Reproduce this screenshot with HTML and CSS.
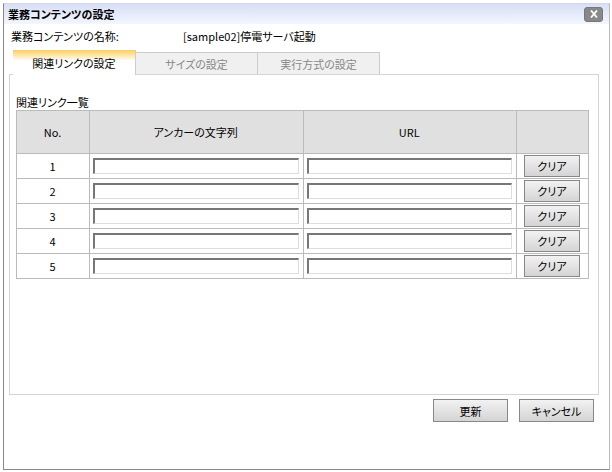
FILE: index.html
```html
<!DOCTYPE html>
<html lang="ja">
<head>
    <meta charset="UTF-8">
    <meta name="viewport" content="width=device-width, initial-scale=1.0">
    <title>業務コンテンツの設定</title>
    <link rel="stylesheet" href="styles.css">
</head>
<body>
    <main class="dialog">
        <header class="title-bar">
            <h1>業務コンテンツの設定</h1>
            <button type="button" class="close-button" aria-label="閉じる">
                <svg width="8" height="8" viewBox="0 0 8 8"><path d="M1 0.5L7 7.5M7 0.5L1 7.5" stroke="#fff" stroke-width="1.8"/></svg>
            </button>
        </header>
        <div class="name-row">
            <span class="name-label">業務コンテンツの名称:</span>
            <span>[sample02]停電サーバ起動</span>
        </div>
        <div class="tabs" role="tablist">
            <button type="button" class="tab active" role="tab" aria-selected="true">関連リンクの設定</button>
            <button type="button" class="tab" role="tab" aria-selected="false">サイズの設定</button>
            <button type="button" class="tab" role="tab" aria-selected="false">実行方式の設定</button>
        </div>
        <section class="panel" role="tabpanel">
            <table class="links">
                <caption>関連リンク一覧</caption>
                <thead>
                    <tr>
                        <th class="col-no">No.</th>
                        <th id="anchor">アンカーの文字列</th>
                        <th id="url">URL</th>
                        <th class="col-action"></th>
                    </tr>
                </thead>
                <tbody>
                    <tr>
                        <td id="row1">1</td>
                        <td><input type="text" aria-labelledby="anchor row1"></td>
                        <td><input type="text" aria-labelledby="url row1"></td>
                        <td><button type="button" class="button clear">クリア</button></td>
                    </tr>
                    <tr>
                        <td id="row2">2</td>
                        <td><input type="text" aria-labelledby="anchor row2"></td>
                        <td><input type="text" aria-labelledby="url row2"></td>
                        <td><button type="button" class="button clear">クリア</button></td>
                    </tr>
                    <tr>
                        <td id="row3">3</td>
                        <td><input type="text" aria-labelledby="anchor row3"></td>
                        <td><input type="text" aria-labelledby="url row3"></td>
                        <td><button type="button" class="button clear">クリア</button></td>
                    </tr>
                    <tr>
                        <td id="row4">4</td>
                        <td><input type="text" aria-labelledby="anchor row4"></td>
                        <td><input type="text" aria-labelledby="url row4"></td>
                        <td><button type="button" class="button clear">クリア</button></td>
                    </tr>
                    <tr>
                        <td id="row5">5</td>
                        <td><input type="text" aria-labelledby="anchor row5"></td>
                        <td><input type="text" aria-labelledby="url row5"></td>
                        <td><button type="button" class="button clear">クリア</button></td>
                    </tr>
                </tbody>
            </table>
        </section>
        <footer class="actions">
            <button type="button" class="button">更新</button>
            <button type="button" class="button">キャンセル</button>
        </footer>
    </main>
</body>
</html>
```
FILE: styles.css
```css
* {
    box-sizing: border-box;
}
body {
    display: flex;
    min-height: 100vh;
    margin: 0;
    padding: 3px 2px 2px 3px;
    background: #fff;
    color: #000;
    font-family: "Noto Sans CJK JP", sans-serif;
    font-size: 11px;
    line-height: 16px;
    font-feature-settings: "palt";
}
button, input {
    font: inherit;
    font-feature-settings: inherit;
    color: inherit;
}
.dialog {
    flex: 1;
    display: flex;
    flex-direction: column;
    border: 1px solid #888;
    border-top-color: #d4d8e4;
    border-right-color: #bbb;
}
.title-bar {
    display: flex;
    align-items: center;
    justify-content: space-between;
    height: 20px;
    padding: 0 6px 0 4px;
    background: linear-gradient(#d8dff5, #f3f6ff);
}
.title-bar h1 {
    margin: 0;
    font-size: 11px;
    font-weight: bold;
}
.close-button {
    display: flex;
    align-items: center;
    justify-content: center;
    width: 19px;
    height: 15px;
    padding: 0;
    background: #888;
    border: 1px solid #777;
    border-radius: 3px;
}
/* Name of the content being edited */
.name-row {
    display: flex;
    padding: 4px 7px 6px;
}
.name-label {
    width: 172px;
}
.tabs {
    display: flex;
    align-items: flex-end;
    padding-left: 9px;
}
.tab {
    width: 122px;
    height: 22px;
    padding: 0;
    background: #f0f0f0;
    border: 1px solid #ccc;
    border-width: 1px 1px 0 0;
    color: #888;
}
/* The active tab covers the panel's top border */
.tab.active {
    position: relative;
    width: 123px;
    height: 25px;
    margin-bottom: -1px;
    background: linear-gradient(#ffd36a, #fff 10px);
    border-top-color: #fbd070;
    color: #000;
}
.panel {
    flex: 1;
    margin: 0 10px 0 5px;
    padding: 19px 9px 0 6px;
    border: 1px solid #d4d4d4;
}
.links {
    width: 100%;
    border-collapse: collapse;
    table-layout: fixed;
}
.links caption {
    text-align: left;
}
.links th, .links td {
    padding: 1px 4px 1px 3px;
    border: 1px solid #bbb;
    text-align: center;
    font-weight: normal;
}
.links th {
    height: 43px;
    background: #e0e0e0;
}
.links .col-no {
    width: 73px;
}
.links .col-action {
    width: 72px;
}
.links input {
    display: block;
    width: 100%;
    height: 16px;
    padding: 0 2px;
    background: #fff;
    border: 1px solid #ddd;
    border-top: 2px solid #777;
    border-left: 2px solid #777;
}
.button {
    width: 75px;
    height: 23px;
    padding: 0;
    background: linear-gradient(#f2f2f2, #d4d4d4);
    border: 1px solid #888;
}
.button.clear {
    display: block;
    width: 56px;
    height: 22px;
    margin: 0 auto;
}
.actions {
    display: flex;
    justify-content: flex-end;
    gap: 11px;
    padding: 4px 15px 47px;
}
```
